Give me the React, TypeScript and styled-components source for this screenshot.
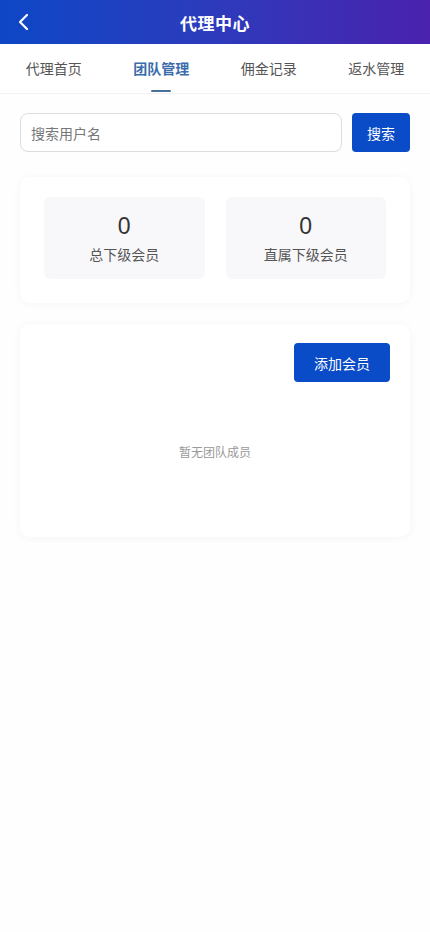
import React, { useState } from 'react';
import styled, { createGlobalStyle } from 'styled-components';

const GlobalStyle = createGlobalStyle`
  * { box-sizing: border-box; }
  body {
    margin: 0;
    background: #fefeff;
    font-family: "Noto Sans CJK SC", "Noto Sans", sans-serif;
    color: #333;
  }
`;

const tabs = ['代理首页', '团队管理', '佣金记录', '返水管理'];

const App = () => {
  const [active, setActive] = useState(1);
  return (
    <Page>
      <GlobalStyle />
      <Header>
        <BackButton aria-label="back">
          <svg width="14" height="18" viewBox="0 0 14 18" fill="none">
            <path d="M10 2L3 9l7 7" stroke="#fff" strokeWidth="2.2" strokeLinecap="round" strokeLinejoin="round" />
          </svg>
        </BackButton>
        <Title>代理中心</Title>
      </Header>

      <TabBar>
        {tabs.map((t, i) => (
          <Tab key={t} $active={i === active} onClick={() => setActive(i)}>
            {t}
          </Tab>
        ))}
      </TabBar>

      <Content>
        <SearchRow>
          <SearchInput placeholder="搜索用户名" />
          <PrimaryButton>搜索</PrimaryButton>
        </SearchRow>

        <Card>
          <StatsGrid>
            <StatBox>
              <StatValue>0</StatValue>
              <StatLabel>总下级会员</StatLabel>
            </StatBox>
            <StatBox>
              <StatValue>0</StatValue>
              <StatLabel>直属下级会员</StatLabel>
            </StatBox>
          </StatsGrid>
        </Card>

        <MembersCard>
          <ActionRow>
            <AddButton>添加会员</AddButton>
          </ActionRow>
          <Empty>暂无团队成员</Empty>
        </MembersCard>
      </Content>
    </Page>
  );
};

export default App;

const Page = styled.div`
  min-height: 932px;
  background: #fefeff;
`;

const Header = styled.header`
  position: relative;
  height: 44px;
  display: flex;
  align-items: center;
  justify-content: center;
  background: linear-gradient(90deg, #0d47c6 0%, #2a3dbd 45%, #4a22ae 100%);
`;

const BackButton = styled.button`
  position: absolute;
  left: 14px;
  top: 12px;
  width: 20px;
  height: 20px;
  padding: 0;
  border: 0;
  background: none;
  display: flex;
  align-items: center;
  justify-content: center;
`;

const Title = styled.h1`
  margin: 0;
  font-size: 17px;
  font-weight: 700;
  color: #fff;
  letter-spacing: 0.5px;
`;

const TabBar = styled.nav`
  display: flex;
  height: 50px;
  background: #fff;
  border-bottom: 1px solid #f2f2f4;
`;

const Tab = styled.div<{ $active: boolean }>`
  position: relative;
  flex: 1;
  display: flex;
  align-items: center;
  justify-content: center;
  font-size: 14px;
  color: ${p => (p.$active ? '#3b6cab' : '#555')};
  font-weight: ${p => (p.$active ? 700 : 400)};
  padding-bottom: 2px;

  &::after {
    content: '';
    display: ${p => (p.$active ? 'block' : 'none')};
    position: absolute;
    bottom: 1px;
    left: 50%;
    width: 20px;
    height: 2px;
    margin-left: -10px;
    background: #47709a;
    border-radius: 1px;
  }
`;

const Content = styled.main`
  padding: 19px 20px;
  display: flex;
  flex-direction: column;
`;

const SearchRow = styled.div`
  display: flex;
  gap: 10px;
  height: 39px;
`;

const SearchInput = styled.input`
  flex: 1;
  min-width: 0;
  height: 39px;
  border: 1px solid #dcdde0;
  border-radius: 8px;
  padding: 0 10px;
  font-size: 14px;
  font-family: inherit;
  color: #333;
  background: #fff;
  outline: none;

  &::placeholder {
    color: #777;
  }
`;

const PrimaryButton = styled.button`
  width: 58px;
  height: 39px;
  border: 0;
  border-radius: 4px;
  background: #0a4bc7;
  color: #fff;
  font-size: 14px;
  font-family: inherit;
`;

const Card = styled.section`
  margin-top: 25px;
  background: #fff;
  border-radius: 10px;
  box-shadow: 0 1px 8px rgba(40, 40, 80, 0.045);
  padding: 20px 24px 24px;
`;

const StatsGrid = styled.div`
  display: grid;
  grid-template-columns: 1fr 1fr;
  gap: 21px;
`;

const StatBox = styled.div`
  height: 82px;
  background: #f8f8fa;
  border-radius: 6px;
  display: flex;
  flex-direction: column;
  align-items: center;
  justify-content: center;
  gap: 4px;
`;

const StatValue = styled.div`
  font-family: "Liberation Sans", Arial, sans-serif;
  font-size: 23px;
  line-height: 28px;
  color: #333;
`;

const StatLabel = styled.div`
  font-size: 14px;
  line-height: 20px;
  color: #555;
`;

const MembersCard = styled.section`
  margin-top: 21px;
  background: #fff;
  border-radius: 10px;
  box-shadow: 0 1px 8px rgba(40, 40, 80, 0.045);
  padding: 19px 20px 0;
  height: 213px;
  display: flex;
  flex-direction: column;
`;

const ActionRow = styled.div`
  display: flex;
  justify-content: flex-end;
`;

const AddButton = styled.button`
  width: 96px;
  height: 39px;
  border: 0;
  border-radius: 4px;
  background: #0a4bc7;
  color: #fff;
  font-size: 14px;
  font-family: inherit;
`;

const Empty = styled.p`
  margin: 61px 0 0;
  text-align: center;
  font-size: 12px;
  color: #999;
`;
